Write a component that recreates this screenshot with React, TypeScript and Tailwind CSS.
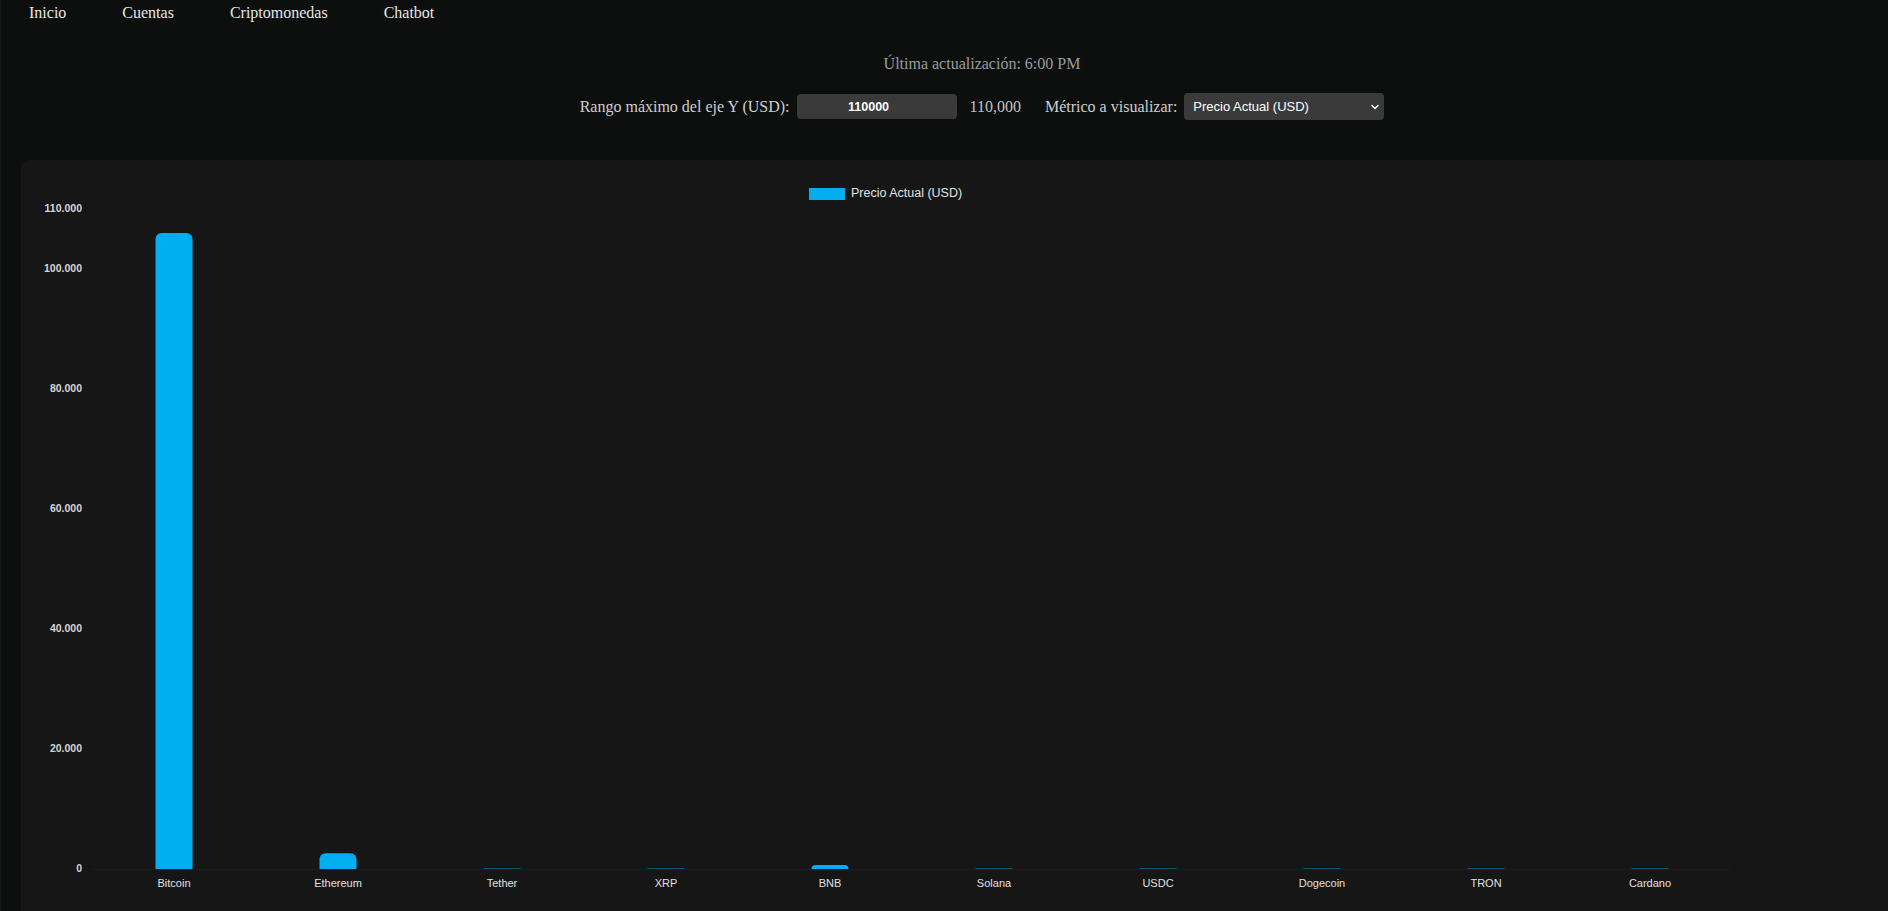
import { ChevronDown } from "lucide-react";

const coins = [
  { name: "Bitcoin", value: 106000 },
  { name: "Ethereum", value: 2620 },
  { name: "Tether", value: 1 },
  { name: "XRP", value: 2.2 },
  { name: "BNB", value: 660 },
  { name: "Solana", value: 150 },
  { name: "USDC", value: 1 },
  { name: "Dogecoin", value: 0.17 },
  { name: "TRON", value: 0.27 },
  { name: "Cardano", value: 0.6 },
];

const ticks = [110000, 100000, 80000, 60000, 40000, 20000, 0];

const BASE = 709;
const SCALE = 0.006;
const yOf = (v: number) => BASE - v * SCALE;

function barPath(x: number, y: number, w: number, h: number, r: number) {
  const rr = Math.min(r, h, w / 2);
  return `M${x},${y + h} L${x},${y + rr} A${rr},${rr} 0 0 1 ${x + rr},${y} L${x + w - rr},${y} A${rr},${rr} 0 0 1 ${x + w},${y + rr} L${x + w},${y + h} Z`;
}

function PriceChart() {
  return (
    <svg width={1690} height={760} className="block" style={{ fontFamily: '"Liberation Sans", Arial, sans-serif' }}>
      {/* legend */}
      <rect x={768} y={28} width={36} height={12} fill="#00aeef" />
      <text x={810} y={34} dominantBaseline="middle" fontSize={12.5} fill="#e2e2e2">
        Precio Actual (USD)
      </text>

      {/* y axis */}
      {ticks.map((t) => (
        <text
          key={t}
          x={41}
          y={yOf(t)}
          textAnchor="end"
          dominantBaseline="middle"
          fontSize={10.5}
          fontWeight={700}
          fill="#d6d6d6"
        >
          {t.toLocaleString("de-DE")}
        </text>
      ))}
      <line x1={51} x2={1690} y1={BASE + 0.5} y2={BASE + 0.5} stroke="#1c1c1c" />

      {/* bars */}
      {coins.map((c, i) => {
        const cx = 133 + 164 * i;
        const w = 37;
        const h = c.value * SCALE;
        return (
          <g key={c.name}>
            {h >= 1 ? (
              <path d={barPath(cx - w / 2, BASE - h, w, h, 6)} fill="#00aeef" />
            ) : (
              <rect x={cx - w / 2} y={BASE - 1} width={w} height={1} fill="#00aeef" opacity={0.4} />
            )}
            <text
              x={cx}
              y={724}
              textAnchor="middle"
              dominantBaseline="middle"
              fontSize={11}
              fill="#e0e0e0"
            >
              {c.name}
            </text>
          </g>
        );
      })}
    </svg>
  );
}

export default function App() {
  return (
    <div className="w-screen h-screen overflow-hidden bg-[#0d0f0f] border-l border-[#171818]">
      <div className="w-[1962px] font-['Liberation_Serif',serif] text-[16px] leading-[18px]">
        <nav className="flex gap-14 pl-7 pt-1 text-[#e6e6e6]">
          <a>Inicio</a>
          <a>Cuentas</a>
          <a>Criptomonedas</a>
          <a>Chatbot</a>
        </nav>

        <p className="mt-[33px] text-center text-[#9c9c9c]">Última actualización: 6:00 PM</p>

        <div className="mt-5 flex h-[27px] items-center justify-center text-[#cfcfcf]">
          <label>Rango máximo del eje Y (USD):</label>
          <input
            type="text"
            readOnly
            value="110000"
            className="ml-[7px] h-[25px] w-[160px] rounded bg-[#3a3a3a] pr-4 text-center font-['Liberation_Sans',sans-serif] text-[12.5px] font-bold text-white outline-none"
          />
          <span className="ml-[13px] text-[#c2c2c2]">110,000</span>
          <label className="ml-6">Métrico a visualizar:</label>
          <div className="relative ml-[7px]">
            <select className="h-[27px] w-[200px] appearance-none rounded bg-[#3a3a3a] pl-[9px] font-['Liberation_Sans',sans-serif] text-[13px] text-white outline-none">
              <option>Precio Actual (USD)</option>
            </select>
            <ChevronDown
              size={12}
              strokeWidth={3}
              className="pointer-events-none absolute right-[3px] top-[8px] text-white"
            />
          </div>
        </div>

        <section className="ml-[20px] mt-10 h-[800px] w-[1920px] rounded-lg bg-[#161616] pl-5">
          <PriceChart />
        </section>
      </div>
    </div>
  );
}
